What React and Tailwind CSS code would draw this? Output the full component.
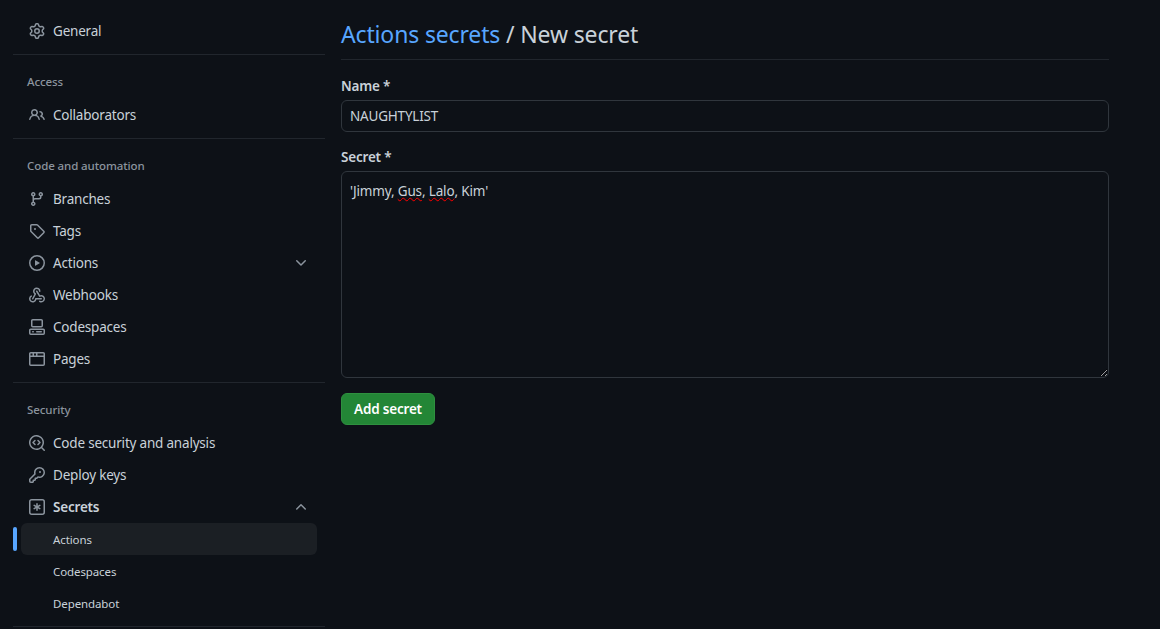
// octicons at their 16px size, react-icons only ships the 24px drawings
const icons = {
  gear: ["M8 0a8.2 8.2 0 0 1 .701.031C9.444.095 9.99.645 10.16 1.29l.288 1.107c.018.066.079.158.212.224.231.114.454.243.668.386.123.082.233.09.299.071l1.103-.303c.644-.176 1.392.021 1.82.63.27.385.506.792.704 1.218.315.675.111 1.422-.364 1.891l-.814.806c-.049.048-.098.147-.088.294.016.257.016.515 0 .772-.01.147.038.246.088.294l.814.806c.475.469.679 1.216.364 1.891a7.977 7.977 0 0 1-.704 1.217c-.428.61-1.176.807-1.82.63l-1.102-.302c-.067-.019-.177-.011-.3.071a5.909 5.909 0 0 1-.668.386c-.133.066-.194.158-.211.224l-.29 1.106c-.168.646-.715 1.196-1.458 1.26a8.006 8.006 0 0 1-1.402 0c-.743-.064-1.289-.614-1.458-1.26l-.289-1.106c-.018-.066-.079-.158-.212-.224a5.738 5.738 0 0 1-.668-.386c-.123-.082-.233-.09-.299-.071l-1.103.303c-.644.176-1.392-.021-1.82-.63a8.12 8.12 0 0 1-.704-1.218c-.315-.675-.111-1.422.363-1.891l.815-.806c.05-.048.098-.147.088-.294a6.214 6.214 0 0 1 0-.772c.01-.147-.038-.246-.088-.294l-.815-.806C.635 6.045.431 5.298.746 4.623a7.92 7.92 0 0 1 .704-1.217c.428-.61 1.176-.807 1.82-.63l1.102.302c.067.019.177.011.3-.071.214-.143.437-.272.668-.386.133-.066.194-.158.211-.224l.29-1.106C6.009.645 6.556.095 7.299.03 7.53.01 7.764 0 8 0Zm-.571 1.525c-.036.003-.108.036-.137.146l-.289 1.105c-.147.561-.549.967-.998 1.189-.173.086-.34.183-.5.29-.417.278-.97.423-1.529.27l-1.103-.303c-.109-.03-.175.016-.195.045-.22.312-.412.644-.573.99-.014.031-.021.11.059.19l.815.806c.411.406.562.957.53 1.456a4.709 4.709 0 0 0 0 .582c.032.499-.119 1.05-.53 1.456l-.815.806c-.081.08-.073.159-.059.19.162.346.353.677.573.989.02.03.085.076.195.046l1.102-.303c.56-.153 1.113-.008 1.53.27.161.107.328.204.501.29.447.222.85.629.997 1.189l.289 1.105c.029.109.101.143.137.146a6.6 6.6 0 0 0 1.142 0c.036-.003.108-.036.137-.146l.289-1.105c.147-.561.549-.967.998-1.189.173-.086.34-.183.5-.29.417-.278.97-.423 1.529-.27l1.103.303c.109.029.175-.016.195-.045.22-.313.411-.644.573-.99.014-.031.021-.11-.059-.19l-.815-.806c-.411-.406-.562-.957-.53-1.456a4.709 4.709 0 0 0 0-.582c-.032-.499.119-1.05.53-1.456l.815-.806c.081-.08.073-.159.059-.19a6.464 6.464 0 0 0-.573-.989c-.02-.03-.085-.076-.195-.046l-1.102.303c-.56.153-1.113.008-1.53-.27a4.44 4.44 0 0 0-.501-.29c-.447-.222-.85-.629-.997-1.189l-.289-1.105c-.029-.11-.101-.143-.137-.146a6.6 6.6 0 0 0-1.142 0ZM11 8a3 3 0 1 1-6 0 3 3 0 0 1 6 0ZM9.5 8a1.5 1.5 0 1 0-3.001.001A1.5 1.5 0 0 0 9.5 8Z"],
  people: ["M2 5.5a3.5 3.5 0 1 1 5.898 2.549 5.508 5.508 0 0 1 3.034 4.084.75.75 0 1 1-1.482.235 4 4 0 0 0-7.9 0 .75.75 0 0 1-1.482-.236A5.507 5.507 0 0 1 3.102 8.05 3.493 3.493 0 0 1 2 5.5ZM11 4a3.001 3.001 0 0 1 2.22 5.018 5.01 5.01 0 0 1 2.56 3.012.749.749 0 0 1-.885.954.752.752 0 0 1-.549-.514 3.507 3.507 0 0 0-2.522-2.372.75.75 0 0 1-.574-.73v-.352a.75.75 0 0 1 .416-.672A1.5 1.5 0 0 0 11 5.5.75.75 0 0 1 11 4Zm-5.5-.5a2 2 0 1 0-.001 3.999A2 2 0 0 0 5.5 3.5Z"],
  branch: ["M9.5 3.25a2.25 2.25 0 1 1 3 2.122V6A2.5 2.5 0 0 1 10 8.5H6a1 1 0 0 0-1 1v1.128a2.251 2.251 0 1 1-1.5 0V5.372a2.25 2.25 0 1 1 1.5 0v1.836A2.493 2.493 0 0 1 6 7h4a1 1 0 0 0 1-1v-.628A2.25 2.25 0 0 1 9.5 3.25Zm-6 0a.75.75 0 1 0 1.5 0 .75.75 0 0 0-1.5 0Zm8.25-.75a.75.75 0 1 0 0 1.5.75.75 0 0 0 0-1.5ZM4.25 12a.75.75 0 1 0 0 1.5.75.75 0 0 0 0-1.5Z"],
  tag: ["M1 7.775V2.75C1 1.784 1.784 1 2.75 1h5.025c.464 0 .91.184 1.238.513l6.25 6.25a1.75 1.75 0 0 1 0 2.474l-5.026 5.026a1.75 1.75 0 0 1-2.474 0l-6.25-6.25A1.752 1.752 0 0 1 1 7.775Zm1.5 0c0 .066.026.13.073.177l6.25 6.25a.25.25 0 0 0 .354 0l5.025-5.025a.25.25 0 0 0 0-.354l-6.25-6.25a.25.25 0 0 0-.177-.073H2.75a.25.25 0 0 0-.25.25ZM6 5a1 1 0 1 1 0 2 1 1 0 0 1 0-2Z"],
  play: ["M8 0a8 8 0 1 1 0 16A8 8 0 0 1 8 0ZM1.5 8a6.5 6.5 0 1 0 13 0 6.5 6.5 0 0 0-13 0Zm4.879-2.773 4.264 2.559a.25.25 0 0 1 0 .428l-4.264 2.559A.25.25 0 0 1 6 10.559V5.442a.25.25 0 0 1 .379-.215Z"],
  webhook: [
    "M5.5 4.25a2.25 2.25 0 0 1 4.5 0 .75.75 0 0 0 1.5 0 3.75 3.75 0 1 0-6.14 2.889l-2.272 4.258a.75.75 0 0 0 1.324.706L7 7.25a.75.75 0 0 0-.309-1.015A2.25 2.25 0 0 1 5.5 4.25Z",
    "M7.364 3.607a.75.75 0 0 1 1.03.257l2.608 4.349a3.75 3.75 0 1 1-.628 6.785.75.75 0 0 1 .752-1.299 2.25 2.25 0 1 0-.033-3.88.75.75 0 0 1-1.03-.256L7.107 4.636a.75.75 0 0 1 .257-1.03Z",
    "M2.9 8.776A.75.75 0 0 1 2.625 9.8 2.25 2.25 0 1 0 6 11.75a.75.75 0 0 1 .75-.751h5.5a.75.75 0 0 1 0 1.5H7.425a3.751 3.751 0 1 1-5.55-3.998.75.75 0 0 1 1.024.274Z",
  ],
  codespaces: [
    "M0 11.25c0-.966.784-1.75 1.75-1.75h12.5c.966 0 1.75.784 1.75 1.75v3A1.75 1.75 0 0 1 14.25 16H1.75A1.75 1.75 0 0 1 0 14.25Zm2-9.5C2 .784 2.784 0 3.75 0h8.5C13.216 0 14 .784 14 1.75v5a1.75 1.75 0 0 1-1.75 1.75h-8.5A1.75 1.75 0 0 1 2 6.75Zm1.75-.25a.25.25 0 0 0-.25.25v5c0 .138.112.25.25.25h8.5a.25.25 0 0 0 .25-.25v-5a.25.25 0 0 0-.25-.25Zm-2 9.5a.25.25 0 0 0-.25.25v3c0 .138.112.25.25.25h12.5a.25.25 0 0 0 .25-.25v-3a.25.25 0 0 0-.25-.25Z",
    "M7 12.75a.75.75 0 0 1 .75-.75h4.5a.75.75 0 0 1 0 1.5h-4.5a.75.75 0 0 1-.75-.75Zm-4 0a.75.75 0 0 1 .75-.75h.5a.75.75 0 0 1 0 1.5h-.5a.75.75 0 0 1-.75-.75Z",
  ],
  browser: ["M0 2.75C0 1.784.784 1 1.75 1h12.5c.966 0 1.75.784 1.75 1.75v10.5A1.75 1.75 0 0 1 14.25 15H1.75A1.75 1.75 0 0 1 0 13.25ZM14.5 6h-13v7.25c0 .138.112.25.25.25h12.5a.25.25 0 0 0 .25-.25Zm-6-3.5v2h6v-1.75a.25.25 0 0 0-.25-.25ZM5 2.5v2h2v-2Zm-3.25 0a.25.25 0 0 0-.25.25V4.5h2v-2Z"],
  codescan: [
    "M8.47 4.97a.75.75 0 0 0 0 1.06L9.94 7.5 8.47 8.97a.75.75 0 1 0 1.06 1.06l2-2a.75.75 0 0 0 0-1.06l-2-2a.75.75 0 0 0-1.06 0ZM6.53 6.03a.75.75 0 0 0-1.06-1.06l-2 2a.75.75 0 0 0 0 1.06l2 2a.75.75 0 1 0 1.06-1.06L5.06 7.5l1.47-1.47Z",
    "M12.246 13.307a7.501 7.501 0 1 1 1.06-1.06l2.474 2.473a.749.749 0 0 1-.326 1.275.749.749 0 0 1-.734-.215ZM1.5 7.5a6.002 6.002 0 0 0 3.608 5.504 6.002 6.002 0 0 0 6.486-1.117.748.748 0 0 1 .292-.293A6 6 0 1 0 1.5 7.5Z",
  ],
  key: ["M10.5 0a5.499 5.499 0 1 1-1.288 10.848l-.932.932a.749.749 0 0 1-.53.22H7v.75a.749.749 0 0 1-.22.53l-.5.5a.749.749 0 0 1-.53.22H5v.75a.749.749 0 0 1-.22.53l-.5.5a.749.749 0 0 1-.53.22h-2A1.75 1.75 0 0 1 0 14.25v-2c0-.199.079-.389.22-.53l4.932-4.932A5.5 5.5 0 0 1 10.5 0Zm-4 5.5c-.001.431.069.86.205 1.269a.75.75 0 0 1-.181.768L1.5 12.56v1.69c0 .138.112.25.25.25h1.69l.06-.06v-1.19a.75.75 0 0 1 .75-.75h1.19l.06-.06v-1.19a.75.75 0 0 1 .75-.75h1.19l1.023-1.025a.75.75 0 0 1 .768-.18A4 4 0 1 0 6.5 5.5ZM11 6a1 1 0 1 1 0-2 1 1 0 0 1 0 2Z"],
  keyAsterisk: [
    "M0 2.75A2.75 2.75 0 0 1 2.75 0h10.5A2.75 2.75 0 0 1 16 2.75v10.5A2.75 2.75 0 0 1 13.25 16H2.75A2.75 2.75 0 0 1 0 13.25ZM2.75 1.5c-.69 0-1.25.56-1.25 1.25v10.5c0 .69.56 1.25 1.25 1.25h10.5c.69 0 1.25-.56 1.25-1.25V2.75c0-.69-.56-1.25-1.25-1.25Z",
    "M8 4a.75.75 0 0 1 .75.75V6.7l1.69-.975a.75.75 0 0 1 .75 1.3L9.5 8l1.69.976a.75.75 0 0 1-.75 1.298L8.75 9.3v1.951a.75.75 0 0 1-1.5 0V9.299l-1.69.976a.75.75 0 0 1-.75-1.3L6.5 8l-1.69-.975a.75.75 0 0 1 .75-1.3l1.69.976V4.75A.75.75 0 0 1 8 4Z",
  ],
  chevronDown: ["M12.78 5.22a.749.749 0 0 1 0 1.06l-4.25 4.25a.749.749 0 0 1-1.06 0L3.22 6.28a.749.749 0 1 1 1.06-1.06L8 8.939l3.72-3.719a.749.749 0 0 1 1.06 0Z"],
  chevronUp: ["M3.22 10.53a.749.749 0 0 1 0-1.06l4.25-4.25a.749.749 0 0 1 1.06 0l4.25 4.25a.749.749 0 0 1-1.06 1.06L8 6.811 4.28 10.53a.749.749 0 0 1-1.06 0Z"],
};

function Octicon({ name, className }) {
  return (
    <svg viewBox="0 0 16 16" fill="currentColor" className={className}>
      {icons[name].map((d) => (
        <path key={d} d={d} />
      ))}
    </svg>
  );
}

const sections = [
  { items: [{ icon: "gear", label: "General" }] },
  { title: "Access", items: [{ icon: "people", label: "Collaborators" }] },
  {
    title: "Code and automation",
    items: [
      { icon: "branch", label: "Branches" },
      { icon: "tag", label: "Tags" },
      { icon: "play", label: "Actions", chevron: "chevronDown" },
      { icon: "webhook", label: "Webhooks" },
      { icon: "codespaces", label: "Codespaces" },
      { icon: "browser", label: "Pages" },
    ],
  },
  {
    title: "Security",
    items: [
      { icon: "codescan", label: "Code security and analysis" },
      { icon: "key", label: "Deploy keys" },
      { icon: "keyAsterisk", label: "Secrets", chevron: "chevronUp", bold: true },
    ],
    sub: [{ label: "Actions", active: true }, { label: "Codespaces" }, { label: "Dependabot" }],
  },
];

function SideItem({ item }) {
  return (
    <div className="mx-2 flex h-8 items-center rounded-md px-2">
      <Octicon name={item.icon} className="mr-2 h-4 w-4 shrink-0 text-[#8b949e]" />
      <span className={`text-[13.5px] tracking-[-0.2px] ${item.bold ? "font-semibold" : ""}`}>{item.label}</span>
      {item.chevron && <Octicon name={item.chevron} className="ml-auto h-4 w-4 text-[#8b949e]" />}
    </div>
  );
}

function SubItem({ item }) {
  return (
    <div className="relative">
      {item.active && <span className="absolute top-1 left-0 h-6 w-1 rounded-md bg-[#58a6ff]" />}
      <div
        className={`mx-2 flex h-8 items-center rounded-md pt-0.5 pl-8 text-[11.5px] tracking-[-0.1px] ${item.active ? "bg-[#1b1f24]" : ""}`}
      >
        {item.label}
      </div>
    </div>
  );
}

export default function App() {
  return (
    <div className="flex h-[629px] gap-4 overflow-hidden bg-[#0d1117] pl-[13px] font-['Noto_Sans',sans-serif] text-[#c9d1d9]">
      <aside className="w-[312px] shrink-0 pt-[15px]">
        {sections.map((section, index) => (
          <div key={index} className="border-b border-[#21262d] pb-[7px]">
            {section.title && (
              <div className="px-3.5 pt-[17px] pb-[7px] text-[11.5px] leading-5 font-medium tracking-[-0.1px] text-[#8b949e]">
                {section.title}
              </div>
            )}
            {section.items.map((item) => (
              <SideItem key={item.label} item={item} />
            ))}
            {section.sub?.map((item) => (
              <SubItem key={item.label} item={item} />
            ))}
          </div>
        ))}
      </aside>

      <main className="w-[768px] shrink-0">
        <div className="flex h-[60px] items-end border-b border-[#21262d] pb-[7px]">
          <h1 className="text-[23px] leading-9 font-normal tracking-[-0.15px]">
            <a className="text-[#58a6ff]">Actions secrets</a> / New secret
          </h1>
        </div>

        <label className="mt-4 block text-[13.5px] leading-5 font-semibold tracking-[-0.2px]">Name *</label>
        <input
          readOnly
          value="NAUGHTYLIST"
          className="mt-1 block h-8 w-full rounded-md border border-[#30363d] bg-[#0d1117] px-2 text-[13.5px] tracking-[-0.2px] outline-none"
        />

        <label className="mt-[15px] block text-[13.5px] leading-5 font-semibold tracking-[-0.2px]">Secret *</label>
        <div className="mt-1 h-[207px] resize overflow-auto rounded-md border border-[#30363d] bg-[#0d1117] px-2 py-[9px] text-[13.5px] leading-5 tracking-[-0.15px] [color-scheme:dark]">
          'Jimmy, <span className="underline decoration-[#ff0000] decoration-wavy decoration-[1.1px]">Gus</span>,{" "}
          <span className="underline decoration-[#ff0000] decoration-wavy decoration-[1.1px]">Lalo</span>, Kim'
        </div>

        <button className="mt-[15px] h-8 w-[94px] rounded-md border border-[#2e903f] bg-[#238636] text-[13.5px] font-semibold tracking-[-0.2px] text-white">
          Add secret
        </button>
      </main>
    </div>
  );
}
